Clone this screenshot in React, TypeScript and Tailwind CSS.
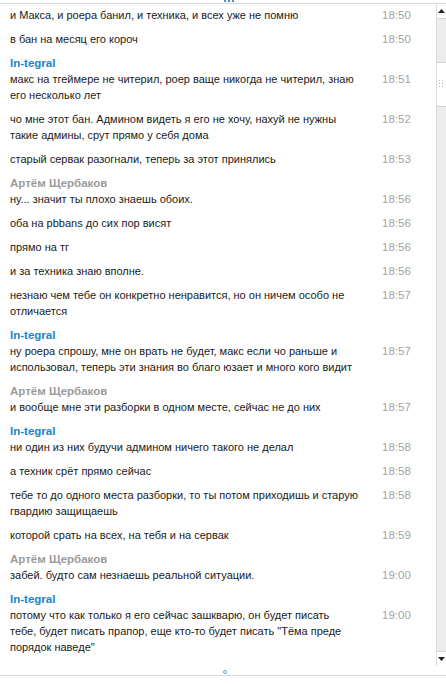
import React from "react";

type Item =
  | { kind: "name"; name: string; blue?: boolean }
  | { kind: "msg"; lines: string[]; time: string };

const BLUE = "In-tegral";
const GRAY = "Артём Щербаков";

const items: Item[] = [
  { kind: "msg", lines: ["и Макса, и роера банил, и техника, и всех уже не помню"], time: "18:50" },
  { kind: "msg", lines: ["в бан на месяц его короч"], time: "18:50" },
  { kind: "name", name: BLUE, blue: true },
  { kind: "msg", lines: ["макс на тгеймере не читерил, роер ваще никогда не читерил, знаю", "его несколько лет"], time: "18:51" },
  { kind: "msg", lines: ["чо мне этот бан. Админом видеть я его не хочу, нахуй не нужны", "такие админы, срут прямо у себя дома"], time: "18:52" },
  { kind: "msg", lines: ["старый сервак разогнали, теперь за этот принялись"], time: "18:53" },
  { kind: "name", name: GRAY },
  { kind: "msg", lines: ["ну... значит ты плохо знаешь обоих."], time: "18:56" },
  { kind: "msg", lines: ["оба на pbbans до сих пор висят"], time: "18:56" },
  { kind: "msg", lines: ["прямо на тг"], time: "18:56" },
  { kind: "msg", lines: ["и за техника знаю вполне."], time: "18:56" },
  { kind: "msg", lines: ["незнаю чем тебе он конкретно ненравится, но он ничем особо не", "отличается"], time: "18:57" },
  { kind: "name", name: BLUE, blue: true },
  { kind: "msg", lines: ["ну роера спрошу, мне он врать не будет, макс если чо раньше и", "использовал, теперь эти знания во благо юзает и много кого видит"], time: "18:57" },
  { kind: "name", name: GRAY },
  { kind: "msg", lines: ["и вообще мне эти разборки в одном месте, сейчас не до них"], time: "18:57" },
  { kind: "name", name: BLUE, blue: true },
  { kind: "msg", lines: ["ни один из них будучи админом ничего такого не делал"], time: "18:58" },
  { kind: "msg", lines: ["а техник срёт прямо сейчас"], time: "18:58" },
  { kind: "msg", lines: ["тебе то до одного места разборки, то ты потом приходишь и старую", "гвардию защищаешь"], time: "18:58" },
  { kind: "msg", lines: ["которой срать на всех, на тебя и на сервак"], time: "18:59" },
  { kind: "name", name: GRAY },
  { kind: "msg", lines: ["забей. будто сам незнаешь реальной ситуации."], time: "19:00" },
  { kind: "name", name: BLUE, blue: true },
  { kind: "msg", lines: ["потому что как только я его сейчас зашкварю, он будет писать", "тебе, будет писать прапор, еще кто-то будет писать \"Тёма преде", "порядок наведе\""], time: "19:00" },
  { kind: "name", name: GRAY },
];

function Scrollbar() {
  return (
    <div className="flex w-[10px] flex-col border-l border-[#dcdcdc] bg-[#ececec]">
      <div className="flex h-[15px] items-center justify-center border-b border-[#d6d6d6] bg-white">
        <svg width="7" height="4" viewBox="0 0 7 4">
          <path d="M0 4 L3.5 0 L7 4 Z" fill="#222" />
        </svg>
      </div>
      <div className="h-[43px]" />
      <div className="flex h-[45px] items-center justify-center border-y border-[#d2d2d2] bg-white">
        <svg width="5" height="9" viewBox="0 0 5 9">
          {[0, 3, 6].map((y) => (
            <g key={y}>
              <rect x="0" y={y} width="1" height="1" fill="#b8b8b8" />
              <rect x="3" y={y} width="1" height="1" fill="#b8b8b8" />
            </g>
          ))}
        </svg>
      </div>
      <div className="flex-1" />
      <div className="flex h-[15px] items-center justify-center border-t border-[#d6d6d6] bg-white">
        <svg width="7" height="4" viewBox="0 0 7 4">
          <path d="M0 0 L3.5 4 L7 0 Z" fill="#222" />
        </svg>
      </div>
    </div>
  );
}

export default function App() {
  return (
    <div
      className="flex h-[684px] w-[446px] flex-col bg-white text-[11px] leading-[16px] text-[#1a1a1a]"
      style={{ fontFamily: "Tahoma, 'Liberation Sans', Arial, sans-serif" }}
    >
      <div className="relative h-[4px] border-b border-[#d8d8d8]">
        <div className="absolute left-[224px] top-[0px] flex gap-[2px]">
          <span className="h-[2px] w-[2px] bg-[#4f8fd0]" />
          <span className="h-[2px] w-[2px] bg-[#4f8fd0]" />
          <span className="h-[2px] w-[2px] bg-[#4f8fd0]" />
        </div>
      </div>
      <div className="flex h-[662px]">
        <div className="flex-1 overflow-hidden pt-[3px]">
          {items.map((it, i) =>
            it.kind === "name" ? (
              <div
                key={i}
                className={`mt-[8px] pl-[10px] text-[11.5px] font-bold ${it.blue ? "text-[#1b82cf]" : "text-[#9b9b9b]"}`}
              >
                {it.name}
              </div>
            ) : (
              <div
                key={i}
                className={`flex ${i > 0 && items[i - 1].kind === "name" ? "" : i > 0 ? "mt-[8px]" : ""}`}
              >
                <div className="w-[382px] pl-[10px]">
                  {it.lines.map((l, j) => (
                    <div key={j} className="whitespace-nowrap">
                      {l}
                    </div>
                  ))}
                </div>
                <div className="text-[11.5px] text-[#a3a3a3]">{it.time}</div>
              </div>
            )
          )}
        </div>
        <Scrollbar />
      </div>
      <div className="relative h-[10px] border-b border-[#dcdcdc]">
        <span className="absolute left-[223px] top-[4px] h-[4px] w-[4px] rounded-full border border-[#6a9fd2]" />
      </div>
    </div>
  );
}
